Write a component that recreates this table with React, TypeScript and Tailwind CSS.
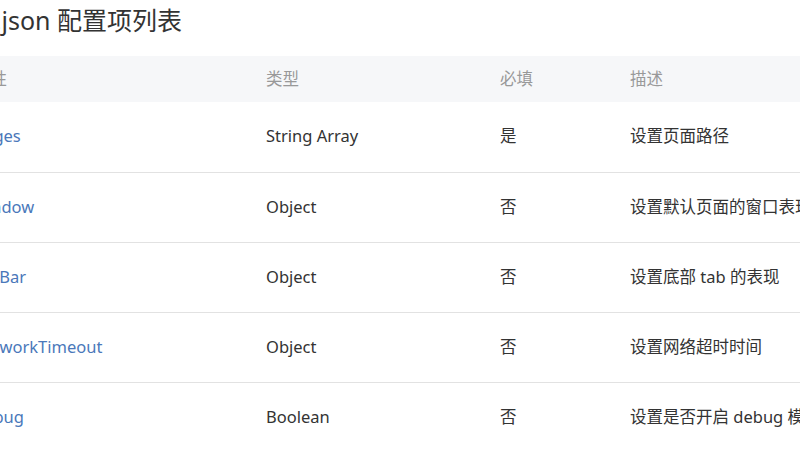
import React from 'react';

const rows = [
  { name: 'pages', type: 'String Array', required: '是', desc: '设置页面路径' },
  { name: 'window', type: 'Object', required: '否', desc: '设置默认页面的窗口表现' },
  { name: 'tabBar', type: 'Object', required: '否', desc: '设置底部 tab 的表现' },
  { name: 'networkTimeout', type: 'Object', required: '否', desc: '设置网络超时时间' },
  { name: 'debug', type: 'Boolean', required: '否', desc: '设置是否开启 debug 模式' },
];

const App: React.FC = () => {
  return (
    <div className="w-[800px] h-[450px] overflow-hidden bg-white font-['Noto_Sans','Noto_Sans_CJK_SC',sans-serif] text-[#333]">
      <div className="w-[1000px] -ml-[50px]">
        {/* Title */}
        <h1 className="mt-[4px] h-[32px] leading-[32px] text-[25px] font-normal text-[#333]">app.json 配置项列表</h1>

        {/* Table */}
        <table className="mt-[20px] w-full border-collapse text-[16.5px] table-fixed">
          <colgroup>
            <col className="w-[292px]" />
            <col className="w-[234px]" />
            <col className="w-[130px]" />
            <col />
          </colgroup>
          <thead>
            <tr className="bg-[#f6f7f9] h-[46px]">
              <th className="px-[24px] text-left font-normal text-[#999]">属性</th>
              <th className="px-[24px] text-left font-normal text-[#999]">类型</th>
              <th className="px-[24px] text-left font-normal text-[#999]">必填</th>
              <th className="px-[24px] text-left font-normal text-[#999]">描述</th>
            </tr>
          </thead>
          <tbody>
            {rows.map((r, i) => (
              <tr key={r.name} className={`h-[70px] ${i < rows.length - 1 ? 'border-b border-[#e2e2e2]' : ''}`}>
                <td className="px-[24px] text-[#4a78ba]">{r.name}</td>
                <td className="px-[24px]">{r.type}</td>
                <td className="px-[24px]">{r.required}</td>
                <td className="px-[24px] whitespace-nowrap">{r.desc}</td>
              </tr>
            ))}
          </tbody>
        </table>
      </div>
    </div>
  );
};

export default App;
